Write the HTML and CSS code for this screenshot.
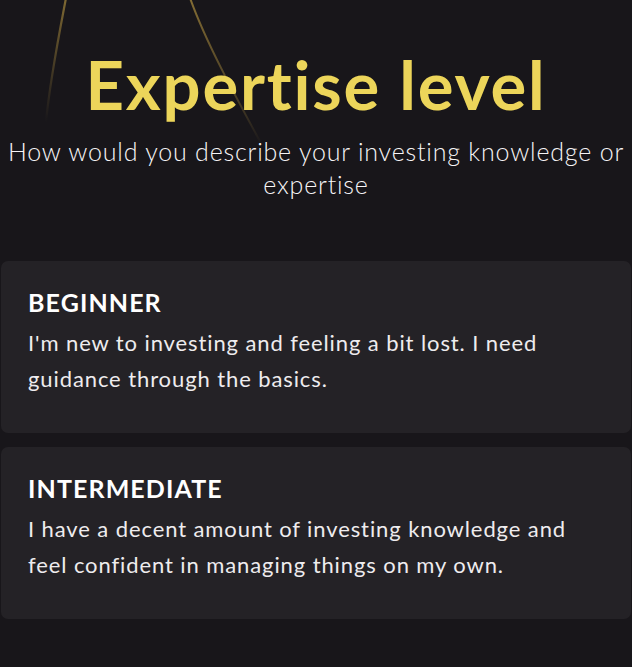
FILE: index.html
```html
<!DOCTYPE html>
<html lang="en">
<head>
<meta charset="utf-8">
<title>Expertise level</title>
<link rel="stylesheet" href="styles.css">
</head>
<body>
<div class="screen">
  <svg class="deco" width="320" height="170" viewBox="0 0 320 170" aria-hidden="true">
    <defs>
      <linearGradient id="g1" x1="0" y1="0" x2="0" y2="1">
        <stop offset="0" stop-color="#8a7235" stop-opacity="0.9"/>
        <stop offset="1" stop-color="#8a7235" stop-opacity="0"/>
      </linearGradient>
      <linearGradient id="g2" x1="0" y1="0" x2="0" y2="1">
        <stop offset="0" stop-color="#8a7235" stop-opacity="0.95"/>
        <stop offset="0.7" stop-color="#6f5c2e" stop-opacity="0.55"/>
        <stop offset="1" stop-color="#6f5c2e" stop-opacity="0"/>
      </linearGradient>
    </defs>
    <path d="M66 -2 C58 40 50 80 46 122" fill="none" stroke="url(#g1)" stroke-width="2.2"/>
    <path d="M190 -2 C205 40 232 90 262 145" fill="none" stroke="url(#g2)" stroke-width="2"/>
  </svg>
  <header class="intro">
    <h1 class="title">Expertise level</h1>
    <p class="subtitle">How would you describe your investing knowledge or expertise</p>
  </header>
  <div class="options">
    <div class="option">
      <div class="option-label">BEGINNER</div>
      <p class="option-text">I'm new to investing and feeling a bit lost. I need guidance through the basics.</p>
    </div>
    <div class="option">
      <div class="option-label">INTERMEDIATE</div>
      <p class="option-text">I have a decent amount of investing knowledge and feel confident in managing things on my own.</p>
    </div>
  </div>
</div>
</body>
</html>
```
FILE: styles.css
```css
* { box-sizing: border-box; }
html, body {
  margin: 0;
  padding: 0;
  background: #18161a;
}
body {
  font-family: "Lato", "Noto Sans", sans-serif;
  color: #f4f2f4;
}
.screen {
  position: relative;
  width: 632px;
  height: 667px;
  overflow: hidden;
  padding-top: 44px;
}
.deco {
  position: absolute;
  left: 0;
  top: 0;
}
.intro {
  position: relative;
  text-align: center;
}
.title {
  margin: 0;
  font-size: 67px;
  line-height: 80px;
  font-weight: 700;
  letter-spacing: 1.8px;
  color: #ecd55a;
}
.subtitle {
  margin: 11px 0 0;
  font-size: 25px;
  line-height: 33px;
  font-weight: 300;
  letter-spacing: 0.8px;
  color: #f6f4f6;
}
.options {
  display: flex;
  flex-direction: column;
  gap: 14px;
  margin-top: 60px;
  padding: 0 1px;
}
.option {
  background: #242226;
  border-radius: 7px;
  padding: 26px 27px 36px;
}
.option-label {
  font-size: 25px;
  line-height: 30px;
  font-weight: 700;
  letter-spacing: 1.1px;
  color: #ffffff;
}
.option-text {
  margin: 8px 0 0;
  font-size: 22px;
  line-height: 36px;
  font-weight: 400;
  letter-spacing: 0.9px;
  color: #eeecee;
  max-width: 548px;
}
```
